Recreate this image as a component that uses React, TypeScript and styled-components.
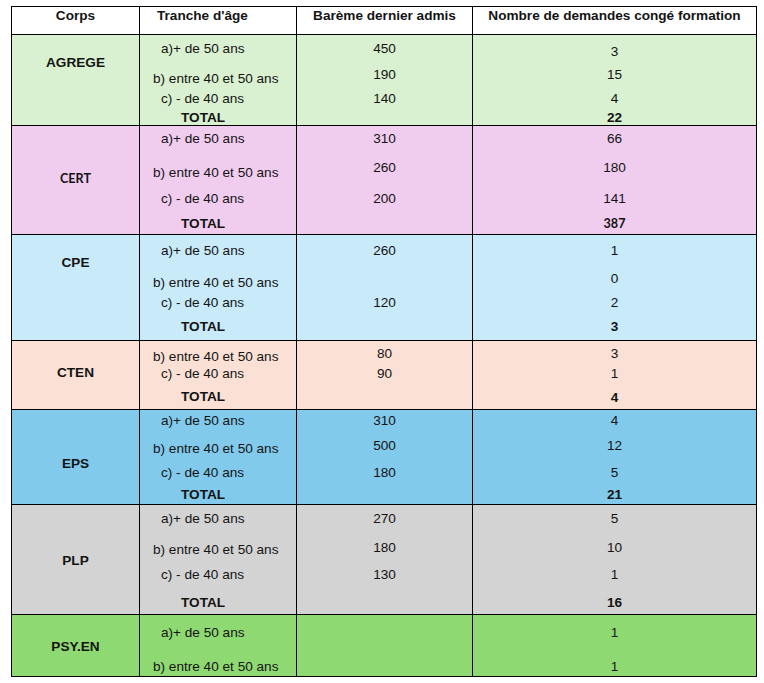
import React from 'react';
import styled, { createGlobalStyle } from 'styled-components';

const GlobalStyle = createGlobalStyle`
  html, body { margin: 0; padding: 0; background: #ffffff; }
  body { font-family: "Liberation Sans", Arial, sans-serif; color: #141414; }
`;

type Item = { t: string; y: number; x?: number; bold?: boolean; alt?: boolean };
type Group = {
  top: number;
  h: number;
  bg: string;
  cols: Item[][];
};

const AGE = { a: 21, b: 13, c: 21, t: 41 };

const a = (y: number): Item => ({ t: 'a)+ de 50 ans', y, x: AGE.a });
const b = (y: number): Item => ({ t: 'b) entre 40 et 50 ans', y, x: AGE.b });
const c = (y: number): Item => ({ t: 'c) - de 40 ans', y, x: AGE.c });
const tot = (y: number): Item => ({ t: 'TOTAL', y, x: AGE.t, bold: true });
const n = (t: string, y: number): Item => ({ t, y });
const nb = (t: string, y: number, alt = false): Item => ({ t, y, bold: true, alt });

const HEADER: Group = {
  top: 7,
  h: 28,
  bg: '#ffffff',
  cols: [
    [{ t: 'Corps', y: 15, bold: true }],
    [{ t: "Tranche d'âge", y: 15, x: 17, bold: true }],
    [{ t: 'Barème dernier admis', y: 15, bold: true }],
    [{ t: 'Nombre de demandes congé formation', y: 15, bold: true }],
  ],
};

const GROUPS: Group[] = [
  {
    top: 35, h: 91, bg: '#d9f1d0',
    cols: [
      [nb('AGREGE', 62)],
      [a(48), b(78), c(98), tot(117)],
      [n('450', 48), n('190', 74), n('140', 98)],
      [n('3', 51), n('15', 74), n('4', 98), nb('22', 117)],
    ],
  },
  {
    top: 126, h: 109, bg: '#f0cdee',
    cols: [
      [nb('CERT', 178, true)],
      [a(138), b(172), c(198), tot(223)],
      [n('310', 138), n('260', 167), n('200', 198)],
      [n('66', 138), n('180', 167), n('141', 198), nb('387', 223, true)],
    ],
  },
  {
    top: 235, h: 106, bg: '#c8eaf9',
    cols: [
      [nb('CPE', 262)],
      [a(250), b(282), c(302), tot(326)],
      [n('260', 250), n('120', 302)],
      [n('1', 250), n('0', 278), n('2', 302), nb('3', 326)],
    ],
  },
  {
    top: 341, h: 69, bg: '#fbe1d5',
    cols: [
      [nb('CTEN', 372)],
      [b(356), c(373), tot(396)],
      [n('80', 353), n('90', 373)],
      [n('3', 353), n('1', 373), nb('4', 397)],
    ],
  },
  {
    top: 410, h: 95, bg: '#82caeb',
    cols: [
      [nb('EPS', 463)],
      [a(420), b(448), c(472), tot(494)],
      [n('310', 420), n('500', 445), n('180', 472)],
      [n('4', 420), n('12', 445), n('5', 472), nb('21', 494)],
    ],
  },
  {
    top: 505, h: 110, bg: '#d3d3d3',
    cols: [
      [nb('PLP', 560)],
      [a(518), b(549), c(574), tot(602)],
      [n('270', 518), n('180', 547), n('130', 574)],
      [n('5', 518), n('10', 547), n('1', 574), nb('16', 602)],
    ],
  },
  {
    top: 615, h: 62, bg: '#8fd973',
    cols: [
      [nb('PSY.EN', 646)],
      [a(632), b(666)],
      [],
      [n('1', 632), n('1', 666)],
    ],
  },
];

const Table = styled.div`
  display: grid;
  grid-template-columns: 128px 157px 176px 284px;
  width: max-content;
  margin: 6px 0 0 11px;
  border-top: 1px solid #000;
  border-left: 1px solid #000;
`;

const Cell = styled.div<{ $bg: string; $h: number }>`
  box-sizing: border-box;
  height: ${(p) => p.$h}px;
  background: ${(p) => p.$bg};
  border-right: 1px solid #000;
  border-bottom: 1px solid #000;
  display: flex;
  flex-direction: column;
  overflow: hidden;
`;

const Line = styled.div<{ $mt: number; $x?: number; $bold?: boolean; $alt?: boolean }>`
  flex: none;
  height: 16px;
  line-height: 16px;
  margin-top: ${(p) => p.$mt}px;
  padding-left: ${(p) => (p.$x === undefined ? 0 : p.$x)}px;
  text-align: ${(p) => (p.$x === undefined ? 'center' : 'left')};
  white-space: nowrap;
  font-family: ${(p) => (p.$alt ? 'Lato, "Liberation Sans", sans-serif' : '"Liberation Sans", Arial, sans-serif')};
  font-size: ${(p) => (p.$alt ? '12.6px' : '13.6px')};
  font-weight: ${(p) => (p.$bold ? 700 : 400)};
  color: #141414;
`;

function Lines({ items, top }: { items: Item[]; top: number }) {
  let cursor = top;
  return (
    <>
      {items.map((it, i) => {
        const mt = it.y - 7 - cursor;
        cursor = it.y + 9;
        return (
          <Line key={i} $mt={mt} $x={it.x} $bold={it.bold} $alt={it.alt}>
            {it.t}
          </Line>
        );
      })}
    </>
  );
}

function Row({ g }: { g: Group }) {
  return (
    <>
      {g.cols.map((items, i) => (
        <Cell key={i} $bg={g.bg} $h={g.h}>
          <Lines items={items} top={g.top} />
        </Cell>
      ))}
    </>
  );
}

export default function App() {
  return (
    <>
      <GlobalStyle />
      <Table>
        <Row g={HEADER} />
        {GROUPS.map((g, i) => (
          <Row key={i} g={g} />
        ))}
      </Table>
    </>
  );
}
